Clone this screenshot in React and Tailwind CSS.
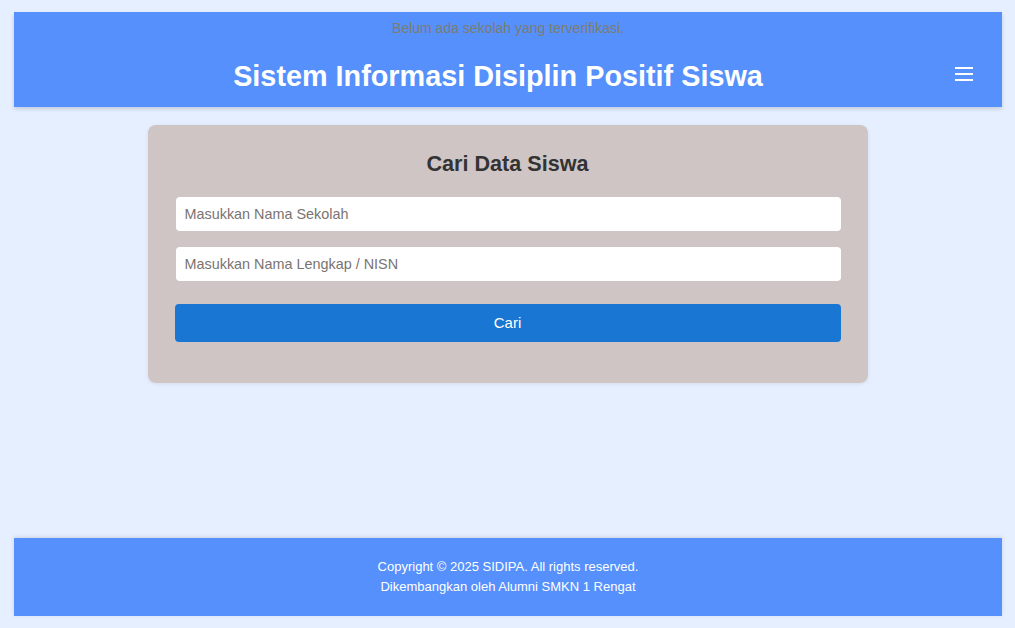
export default function App() {
  const font = { fontFamily: '"Liberation Sans", Arial, sans-serif' };
  return (
    <div style={font} className="h-screen bg-[#e6efff] flex flex-col pt-[12px] pb-[12px]">
      <header className="ml-[14px] w-[988px] h-[95px] bg-[#5590fc] shadow-[0_2px_4px_rgba(0,0,0,0.15)] flex flex-col items-center relative">
        <div className="mt-[8px] text-[14px] leading-[16px] text-[#7d7d6e]">Belum ada sekolah yang terverifikasi.</div>
        <h1 className="mt-[24px] pr-[20px] text-[28.8px] leading-[32px] font-bold text-white">Sistem Informasi Disiplin Positif Siswa</h1>
        <div className="absolute right-[29px] top-[55px] w-[18px] flex flex-col gap-[4px]">
          <span className="block h-[2px] bg-white"></span>
          <span className="block h-[2px] bg-white"></span>
          <span className="block h-[2px] bg-white"></span>
        </div>
      </header>
      <main className="flex-1">
        <div className="mx-auto mt-[18px] w-[720px] bg-[#cfc5c4] rounded-[8px] px-[27px] pt-[26px] pb-[41px] shadow-[0_1px_4px_rgba(0,0,0,0.08)]">
          <h2 className="text-center text-[21.6px] leading-[26px] font-bold text-[#333333]">Cari Data Siswa</h2>
          <input
            placeholder="Masukkan Nama Sekolah"
            className="mt-[20px] ml-[1px] block w-[665px] h-[34px] bg-white rounded-[4px] px-[9px] text-[14.4px] text-[#333] placeholder:text-[#7a7370] outline-none"
          />
          <input
            placeholder="Masukkan Nama Lengkap / NISN"
            className="mt-[16px] ml-[1px] block w-[665px] h-[34px] bg-white rounded-[4px] px-[9px] text-[14.4px] text-[#333] placeholder:text-[#7a7370] outline-none"
          />
          <button className="mt-[23px] block w-[666px] h-[38px] bg-[#1976d2] rounded-[4px] text-white text-[15px]">Cari</button>
        </div>
      </main>
      <footer className="ml-[14px] w-[988px] h-[78px] bg-[#5590fc] shadow-[0_-1px_4px_rgba(0,0,0,0.12)] flex flex-col items-center justify-center text-white text-[13px] leading-[20px]">
        <div>Copyright © 2025 SIDIPA. All rights reserved.</div>
        <div>Dikembangkan oleh Alumni SMKN 1 Rengat</div>
      </footer>
    </div>
  );
}
